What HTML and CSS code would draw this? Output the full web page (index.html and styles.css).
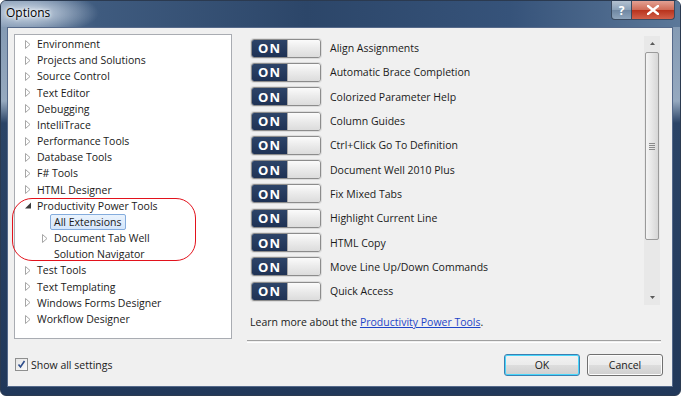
FILE: index.html
```html
<!DOCTYPE html>
<html>
<head>
    <title>Options</title>
<link rel="stylesheet" href="styles.css">
</head>
<body>
<div class="window">
    <div class="titlebar">
        <span class="title">Options</span>
        <div class="caption">
            <span class="cap-help">?</span>
            <span class="cap-close">
                <svg width="12" height="10" viewBox="0 0 12 10"><path d="M1 1 L11 9 M11 1 L1 9" stroke="#fff" stroke-width="2.4" stroke-linecap="square"/></svg>
            </span>
        </div>
    </div>
    <div class="client">
        <div class="main">
            <div class="tree">
                <div class="node"><span class="tw"><svg width="6" height="9" viewBox="0 0 6 9"><path d="M0.5 0.5 L5 4.5 L0.5 8.5 Z" fill="#fff" stroke="#a6a6a6"/></svg></span>Environment</div>
                <div class="node"><span class="tw"><svg width="6" height="9" viewBox="0 0 6 9"><path d="M0.5 0.5 L5 4.5 L0.5 8.5 Z" fill="#fff" stroke="#a6a6a6"/></svg></span>Projects and Solutions</div>
                <div class="node"><span class="tw"><svg width="6" height="9" viewBox="0 0 6 9"><path d="M0.5 0.5 L5 4.5 L0.5 8.5 Z" fill="#fff" stroke="#a6a6a6"/></svg></span>Source Control</div>
                <div class="node"><span class="tw"><svg width="6" height="9" viewBox="0 0 6 9"><path d="M0.5 0.5 L5 4.5 L0.5 8.5 Z" fill="#fff" stroke="#a6a6a6"/></svg></span>Text Editor</div>
                <div class="node"><span class="tw"><svg width="6" height="9" viewBox="0 0 6 9"><path d="M0.5 0.5 L5 4.5 L0.5 8.5 Z" fill="#fff" stroke="#a6a6a6"/></svg></span>Debugging</div>
                <div class="node"><span class="tw"><svg width="6" height="9" viewBox="0 0 6 9"><path d="M0.5 0.5 L5 4.5 L0.5 8.5 Z" fill="#fff" stroke="#a6a6a6"/></svg></span>IntelliTrace</div>
                <div class="node"><span class="tw"><svg width="6" height="9" viewBox="0 0 6 9"><path d="M0.5 0.5 L5 4.5 L0.5 8.5 Z" fill="#fff" stroke="#a6a6a6"/></svg></span>Performance Tools</div>
                <div class="node"><span class="tw"><svg width="6" height="9" viewBox="0 0 6 9"><path d="M0.5 0.5 L5 4.5 L0.5 8.5 Z" fill="#fff" stroke="#a6a6a6"/></svg></span>Database Tools</div>
                <div class="node"><span class="tw"><svg width="6" height="9" viewBox="0 0 6 9"><path d="M0.5 0.5 L5 4.5 L0.5 8.5 Z" fill="#fff" stroke="#a6a6a6"/></svg></span>F# Tools</div>
                <div class="node"><span class="tw"><svg width="6" height="9" viewBox="0 0 6 9"><path d="M0.5 0.5 L5 4.5 L0.5 8.5 Z" fill="#fff" stroke="#a6a6a6"/></svg></span>HTML Designer</div>
                <div class="node"><span class="tw"><svg width="6" height="7" viewBox="0 0 6 7"><path d="M6 0.5 L6 6.5 L0 6.5 Z" fill="#3c3c3c"/></svg></span>Productivity Power Tools</div>
                <div class="node child"><span class="tw"></span><span class="sel">All Extensions</span></div>
                <div class="node child"><span class="tw"><svg width="6" height="9" viewBox="0 0 6 9"><path d="M0.5 0.5 L5 4.5 L0.5 8.5 Z" fill="#fff" stroke="#a6a6a6"/></svg></span>Document Tab Well</div>
                <div class="node child"><span class="tw"></span>Solution Navigator</div>
                <div class="node"><span class="tw"><svg width="6" height="9" viewBox="0 0 6 9"><path d="M0.5 0.5 L5 4.5 L0.5 8.5 Z" fill="#fff" stroke="#a6a6a6"/></svg></span>Test Tools</div>
                <div class="node"><span class="tw"><svg width="6" height="9" viewBox="0 0 6 9"><path d="M0.5 0.5 L5 4.5 L0.5 8.5 Z" fill="#fff" stroke="#a6a6a6"/></svg></span>Text Templating</div>
                <div class="node"><span class="tw"><svg width="6" height="9" viewBox="0 0 6 9"><path d="M0.5 0.5 L5 4.5 L0.5 8.5 Z" fill="#fff" stroke="#a6a6a6"/></svg></span>Windows Forms Designer</div>
                <div class="node"><span class="tw"><svg width="6" height="9" viewBox="0 0 6 9"><path d="M0.5 0.5 L5 4.5 L0.5 8.5 Z" fill="#fff" stroke="#a6a6a6"/></svg></span>Workflow Designer</div>
                <div class="callout"></div>
            </div>
            <div class="pane">
                <div class="list-wrap">
                    <ul class="toggles">
                        <li><span class="switch"><b>ON</b><span class="knob"></span></span>Align Assignments</li>
                        <li><span class="switch"><b>ON</b><span class="knob"></span></span>Automatic Brace Completion</li>
                        <li><span class="switch"><b>ON</b><span class="knob"></span></span>Colorized Parameter Help</li>
                        <li><span class="switch"><b>ON</b><span class="knob"></span></span>Column Guides</li>
                        <li><span class="switch"><b>ON</b><span class="knob"></span></span>Ctrl+Click Go To Definition</li>
                        <li><span class="switch"><b>ON</b><span class="knob"></span></span>Document Well 2010 Plus</li>
                        <li><span class="switch"><b>ON</b><span class="knob"></span></span>Fix Mixed Tabs</li>
                        <li><span class="switch"><b>ON</b><span class="knob"></span></span>Highlight Current Line</li>
                        <li><span class="switch"><b>ON</b><span class="knob"></span></span>HTML Copy</li>
                        <li><span class="switch"><b>ON</b><span class="knob"></span></span>Move Line Up/Down Commands</li>
                        <li><span class="switch"><b>ON</b><span class="knob"></span></span>Quick Access</li>
                    </ul>
                    <div class="scrollbar">
                        <span class="sb-arrow"><svg width="5" height="3" viewBox="0 0 5 3"><path d="M2.5 0 L5 3 L0 3 Z" fill="#5a5a5a"/></svg></span>
                        <span class="sb-thumb"><svg width="6" height="7" viewBox="0 0 6 7"><path d="M0 0.5 H6 M0 2.5 H6 M0 4.5 H6 M0 6.5 H6" stroke="#8a8a8a"/></svg></span>
                        <span class="sb-track"></span>
                        <span class="sb-arrow"><svg width="5" height="3" viewBox="0 0 5 3"><path d="M0 0 L5 0 L2.5 3 Z" fill="#5a5a5a"/></svg></span>
                    </div>
                </div>
                <p class="learn">Learn more about the <a href="#">Productivity Power Tools</a>.</p>
                <div class="sep"></div>
            </div>
        </div>
        <div class="footer">
            <label class="check">
                <span class="box"><svg width="9" height="9" viewBox="0 0 9 9"><path d="M1.5 4.5 L3.5 7 L7.5 1" fill="none" stroke="#2d4d8c" stroke-width="1.6"/></svg></span>
                Show all settings
            </label>
            <div class="buttons">
                <button class="btn default">OK</button>
                <button class="btn">Cancel</button>
            </div>
        </div>
    </div>
</div>
</body>
</html>
```

FILE: styles.css
```css
body {
    margin: 0;
    font-family: "Open Sans", "Noto Sans", sans-serif;
    font-size: 10.5px;
    color: #1a1a1a;
}
.window {
    width: 681px;
    height: 396px;
    box-sizing: border-box;
    display: flex;
    flex-direction: column;
    border: 1px solid #2b3a50;
    border-radius: 6px;
    background: linear-gradient(180deg, #7f96b0 0, #96a9bf 100px, #2b4467 122px, #21385a 100%);
}
.titlebar {
    height: 26px;
    display: flex;
    justify-content: space-between;
    align-items: flex-start;
    padding: 0 5px 0 5px;
    border-radius: 5px 5px 0 0;
    background:
        radial-gradient(ellipse 70px 22px at 28px 12px, rgba(215,226,238,0.95), rgba(215,226,238,0)),
        linear-gradient(90deg, #7189a7 0%, #3f5b7f 14%, #2c4669 45%, #36537a 75%, #5c7899 100%);
}
.title {
    line-height: 24px;
    font-size: 12px;
    color: #000;
    text-shadow: 0 0 5px #fff, 0 0 3px #fff;
}
.caption {
    display: flex;
}
.caption span {
    height: 18px;
    display: flex;
    align-items: center;
    justify-content: center;
    border: 1px solid #3a4a60;
    border-top: none;
}
.cap-help {
    width: 19px;
    border-radius: 0 0 0 4px;
    color: #fff;
    font-weight: bold;
    font-size: 12px;
    background: linear-gradient(180deg, #b3c1d0 0, #8aa0b7 50%, #6f87a2 51%, #8ea4bb 100%);
}
.cap-close {
    width: 42px;
    border-left: none !important;
    border-radius: 0 0 4px 0;
    background: linear-gradient(180deg, #e3a193 0, #cf6a55 50%, #b8321c 51%, #d2604a 100%);
}
.client {
    flex: 1;
    margin: 0 7px 8px 6px;
    background: #f0f0f0;
    border: 1px solid #55698a;
    display: flex;
    flex-direction: column;
}
.main {
    display: flex;
    gap: 15px;
    padding: 6px 11px 0 6px;
}
.tree {
    position: relative;
    width: 216px;
    height: 302px;
    border: 1px solid #a9acb2;
    background: #fff;
    padding-top: 1px;
    box-sizing: content-box;
}
.node {
    height: 16.18px;
    display: flex;
    align-items: center;
    padding-left: 8px;
    white-space: nowrap;
}
.node.child {
    padding-left: 25px;
}
.tw {
    width: 12px;
    padding-left: 2px;
    display: flex;
    align-items: center;
}
.sel {
    margin-left: -4px;
    padding: 0 3px;
    line-height: 14px;
    border: 1px solid #84acdd;
    border-radius: 2px;
    background: linear-gradient(180deg, #eaf3fd 0, #d5e6fb 100%);
}
.callout {
    position: absolute;
    left: -3px;
    top: 163px;
    width: 182px;
    height: 61px;
    border: 1.5px solid #e2121c;
    border-radius: 20px;
}
.pane {
    flex: 1;
    display: flex;
    flex-direction: column;
    padding-top: 2px;
}
.list-wrap {
    height: 269px;
    display: flex;
    justify-content: space-between;
}
.toggles {
    list-style: none;
    margin: 0;
    padding: 0 0 0 4px;
}
.toggles li {
    height: 24.3px;
    display: flex;
    align-items: center;
    white-space: nowrap;
}
.switch {
    width: 68px;
    height: 17px;
    margin-right: 9px;
    display: flex;
    border: 1px solid #8c8c8c;
    border-radius: 3px;
    overflow: hidden;
    box-shadow: 0 0 0 1px #dcdcdc;
}
.switch b {
    width: 35px;
    display: flex;
    align-items: center;
    justify-content: center;
    color: #fff;
    font-size: 13px;
    letter-spacing: 1px;
    background: linear-gradient(180deg, #2d4468 0, #1f3254 100%);
}
.knob {
    flex: 1;
    border-left: 1px solid #a8a8a8;
    background: linear-gradient(180deg, #fbfbfb 0, #ececec 45%, #dcdcdc 100%);
}
.scrollbar {
    width: 16px;
    margin-right: 1px;
    display: flex;
    flex-direction: column;
    background: #e8e8e8;
}
.sb-arrow {
    height: 15px;
    display: flex;
    align-items: center;
    justify-content: center;
}
.sb-thumb {
    height: 186px;
    margin: 1px 1px 0 1px;
    display: flex;
    align-items: center;
    justify-content: center;
    border: 1px solid #9a9a9a;
    border-radius: 2px;
    background: linear-gradient(90deg, #f4f4f4 0, #e6e6e6 50%, #d6d6d6 100%);
}
.sb-track {
    flex: 1;
}
.learn {
    margin: 9px 0 0 3px;
    line-height: 16px;
}
.learn a {
    color: #1e45c8;
}
.sep {
    margin-top: 10px;
    height: 1px;
    border-top: 1px solid #a0a0a0;
    border-bottom: 1px solid #fff;
}
.footer {
    flex: 1;
    display: flex;
    align-items: center;
    justify-content: space-between;
    padding: 0 9px 0 7px;
}
.check {
    display: flex;
    align-items: center;
    gap: 3px;
}
.box {
    width: 11px;
    height: 11px;
    display: flex;
    align-items: center;
    justify-content: center;
    border: 1px solid #8e8f8f;
    background: linear-gradient(135deg, #e4e4e4 0, #fafafa 100%);
}
.buttons {
    display: flex;
    gap: 7px;
}
.btn {
    width: 76px;
    height: 22px;
    padding: 0;
    font-family: inherit;
    font-size: 10.5px;
    color: #1a1a1a;
    border: 1px solid #707070;
    border-radius: 3px;
    background: linear-gradient(180deg, #f2f2f2 0, #ebebeb 50%, #dddddd 51%, #cfcfcf 100%);
    box-shadow: inset 0 0 0 1px #fcfcfc;
}
.btn.default {
    border-color: #3c7fb1;
    box-shadow: inset 0 0 0 1px #48d6fb;
}
```
